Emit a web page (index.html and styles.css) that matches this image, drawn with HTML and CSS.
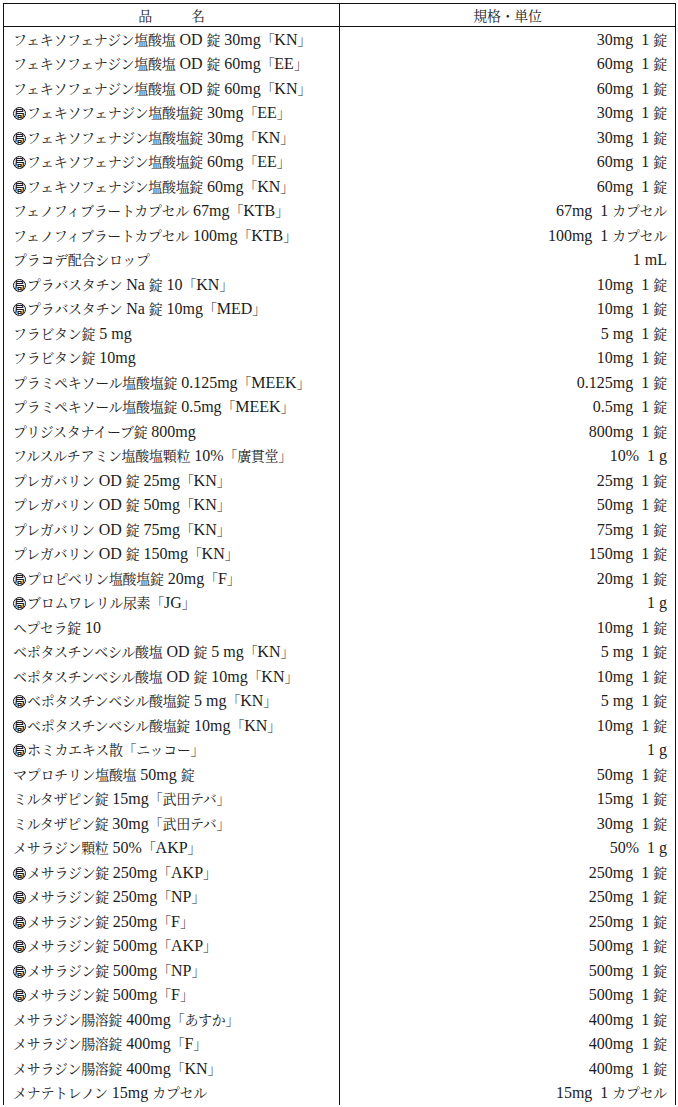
FILE: index.html
```html
<!DOCTYPE html>
<html lang="ja">
  <head>
    <meta charset="UTF-8" />
    <meta name="viewport" content="width=device-width, initial-scale=1.0" />
    <title>品名一覧</title>
    <link rel="stylesheet" href="styles.css">
  </head>
  <body>
    <table class="drug-table">
      <thead>
        <tr>
          <th><span class="ja">品</span><span class="ja head-gap">名</span></th>
          <th><span class="ja">規格・単位</span></th>
        </tr>
      </thead>
      <tbody id="rows"></tbody>
    </table>

    <script>
      // "*" at the start of a name = 局 mark
      const rows = [
        ["フェキソフェナジン塩酸塩 OD 錠 30mg「KN」", "30mg", "錠"],
        ["フェキソフェナジン塩酸塩 OD 錠 60mg「EE」", "60mg", "錠"],
        ["フェキソフェナジン塩酸塩 OD 錠 60mg「KN」", "60mg", "錠"],
        ["*フェキソフェナジン塩酸塩錠 30mg「EE」", "30mg", "錠"],
        ["*フェキソフェナジン塩酸塩錠 30mg「KN」", "30mg", "錠"],
        ["*フェキソフェナジン塩酸塩錠 60mg「EE」", "60mg", "錠"],
        ["*フェキソフェナジン塩酸塩錠 60mg「KN」", "60mg", "錠"],
        ["フェノフィブラートカプセル 67mg「KTB」", "67mg", "カプセル"],
        ["フェノフィブラートカプセル 100mg「KTB」", "100mg", "カプセル"],
        ["プラコデ配合シロップ", "", "mL"],
        ["*プラバスタチン Na 錠 10「KN」", "10mg", "錠"],
        ["*プラバスタチン Na 錠 10mg「MED」", "10mg", "錠"],
        ["フラビタン錠 5 mg", "5 mg", "錠"],
        ["フラビタン錠 10mg", "10mg", "錠"],
        ["プラミペキソール塩酸塩錠 0.125mg「MEEK」", "0.125mg", "錠"],
        ["プラミペキソール塩酸塩錠 0.5mg「MEEK」", "0.5mg", "錠"],
        ["プリジスタナイーブ錠 800mg", "800mg", "錠"],
        ["フルスルチアミン塩酸塩顆粒 10%「廣貫堂」", "10%", "g"],
        ["プレガバリン OD 錠 25mg「KN」", "25mg", "錠"],
        ["プレガバリン OD 錠 50mg「KN」", "50mg", "錠"],
        ["プレガバリン OD 錠 75mg「KN」", "75mg", "錠"],
        ["プレガバリン OD 錠 150mg「KN」", "150mg", "錠"],
        ["*プロピベリン塩酸塩錠 20mg「F」", "20mg", "錠"],
        ["*ブロムワレリル尿素「JG」", "", "g"],
        ["ヘプセラ錠 10", "10mg", "錠"],
        ["ベポタスチンベシル酸塩 OD 錠 5 mg「KN」", "5 mg", "錠"],
        ["ベポタスチンベシル酸塩 OD 錠 10mg「KN」", "10mg", "錠"],
        ["*ベポタスチンベシル酸塩錠 5 mg「KN」", "5 mg", "錠"],
        ["*ベポタスチンベシル酸塩錠 10mg「KN」", "10mg", "錠"],
        ["*ホミカエキス散「ニッコー」", "", "g"],
        ["マプロチリン塩酸塩 50mg 錠", "50mg", "錠"],
        ["ミルタザピン錠 15mg「武田テバ」", "15mg", "錠"],
        ["ミルタザピン錠 30mg「武田テバ」", "30mg", "錠"],
        ["メサラジン顆粒 50%「AKP」", "50%", "g"],
        ["*メサラジン錠 250mg「AKP」", "250mg", "錠"],
        ["*メサラジン錠 250mg「NP」", "250mg", "錠"],
        ["*メサラジン錠 250mg「F」", "250mg", "錠"],
        ["*メサラジン錠 500mg「AKP」", "500mg", "錠"],
        ["*メサラジン錠 500mg「NP」", "500mg", "錠"],
        ["*メサラジン錠 500mg「F」", "500mg", "錠"],
        ["メサラジン腸溶錠 400mg「あすか」", "400mg", "錠"],
        ["メサラジン腸溶錠 400mg「F」", "400mg", "錠"],
        ["メサラジン腸溶錠 400mg「KN」", "400mg", "錠"],
        ["メナテトレノン 15mg カプセル", "15mg", "カプセル"]
      ];

      // japanese runs get their own (smaller) size
      function wrapJa(text) {
        return text.replace(/[\u3000-\u30ff\u4e00-\u9fff\uff00-\uffef]+/g, function (m) {
          return '<span class="ja">' + m + "</span>";
        });
      }

      let html = "";
      rows.forEach(function (r) {
        let name = r[0];
        let mark = "";
        if (name.charAt(0) === "*") {
          name = name.slice(1);
          mark = '<span class="kyoku">局</span>';
        }
        let spec = r[1] ? wrapJa(r[1]) + "&ensp;" : "";
        spec += "1 " + wrapJa(r[2]);
        html += "<tr><td>" + mark + wrapJa(name) + '</td><td class="spec">' + spec + "</td></tr>";
      });
      document.getElementById("rows").innerHTML = html;
    </script>
  </body>
</html>
```

FILE: styles.css
```css
body {
  margin: 0;
  padding: 3px 0 0 3px;
  background: #fff;
  color: #1c1c1c;
  font-family: "Liberation Serif", "Noto Serif CJK JP", "Noto Sans CJK JP", serif;
  font-size: 16px;
}
.drug-table {
  width: 673px;
  border-collapse: collapse;
  table-layout: fixed;
  border: 1px solid #111;
  border-bottom: none;
}
.drug-table th {
  height: 22px;
  padding: 0;
  font-weight: normal;
  text-align: center;
  border-left: 1px solid #111;
  border-bottom: 1px solid #111;
  line-height: 18px;
}
.drug-table td {
  height: 24.5px;
  padding: 0 8px 0 9px;
  border-left: 1px solid #111;
  vertical-align: middle;
  line-height: 18px;
  white-space: nowrap;
}
.drug-table td.spec {
  text-align: right;
}
.ja {
  font-family: "Noto Serif CJK JP", "Noto Sans CJK JP", sans-serif;
  font-size: 14px;
  letter-spacing: -0.3px;
}
.head-gap {
  margin-left: 39px;
}
.kyoku {
  display: inline-block;
  width: 11px;
  height: 11px;
  border: 1.6px solid #111;
  border-radius: 50%;
  font-family: "Noto Sans CJK JP", sans-serif;
  font-size: 10.5px;
  font-weight: bold;
  line-height: 11px;
  text-align: center;
  vertical-align: -2px;
  margin-right: 1px;
  overflow: hidden;
}
```
